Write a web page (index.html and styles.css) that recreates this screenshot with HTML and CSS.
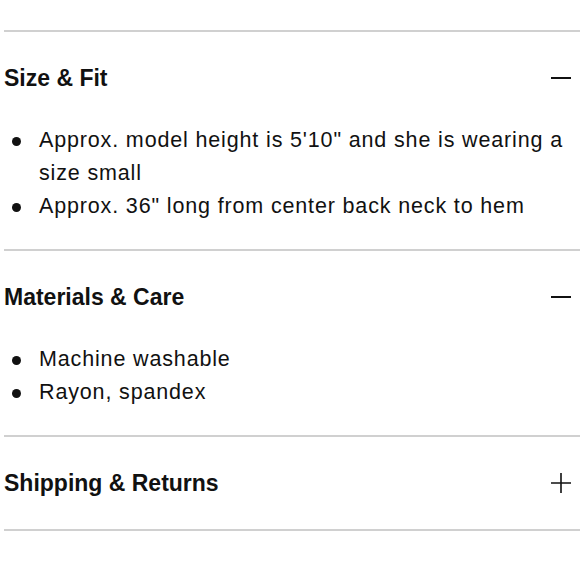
FILE: index.html
```html
<!DOCTYPE html>
<html>
<head>
<meta charset="utf-8">
<link rel="stylesheet" href="styles.css">
</head>
<body>
<div class="accordion">
  <section class="item">
    <div class="head">
      <h3 class="title">Size &amp; Fit</h3>
      <svg class="icon" width="20" height="20" viewBox="0 0 20 20"><path d="M0 10H20" stroke="#111" stroke-width="2"/></svg>
    </div>
    <ul class="list">
      <li>Approx. model height is 5'10" and she is wearing a size small</li>
      <li>Approx. 36" long from center back neck to hem</li>
    </ul>
  </section>
  <section class="item">
    <div class="head">
      <h3 class="title">Materials &amp; Care</h3>
      <svg class="icon" width="20" height="20" viewBox="0 0 20 20"><path d="M0 10H20" stroke="#111" stroke-width="2"/></svg>
    </div>
    <ul class="list">
      <li>Machine washable</li>
      <li>Rayon, spandex</li>
    </ul>
  </section>
  <section class="item last">
    <div class="head">
      <h3 class="title">Shipping &amp; Returns</h3>
      <svg class="icon" width="20" height="20" viewBox="0 0 20 20"><path d="M0 10H20M10 0V20" stroke="#111" stroke-width="1.6"/></svg>
    </div>
  </section>
</div>
</body>
</html>
```
FILE: styles.css
```css
html, body {
  margin: 0;
  padding: 0;
  background: #fff;
}
body {
  font-family: "Liberation Sans", Arial, sans-serif;
  color: #111;
}
.accordion {
  margin: 30px 0 0 4px;
  width: 576px;
}
.item {
  border-top: 2px solid #d0d0d0;
}
.item.last {
  border-bottom: 2px solid #d0d0d0;
}
.head {
  height: 92px;
  display: flex;
  align-items: center;
  justify-content: space-between;
  padding-right: 9px;
}
.title {
  margin: 0;
  font-size: 23px;
  font-weight: bold;
  color: #111;
}
.icon {
  display: block;
}
.list {
  margin: 0;
  padding: 0 10px 26px 35px;
  list-style: none;
  font-size: 21.5px;
  letter-spacing: 0.85px;
  line-height: 33px;
}
.list li {
  position: relative;
}
.list li::before {
  content: "";
  position: absolute;
  left: -27px;
  top: 13px;
  width: 9px;
  height: 9px;
  border-radius: 50%;
  background: #111;
}
```
